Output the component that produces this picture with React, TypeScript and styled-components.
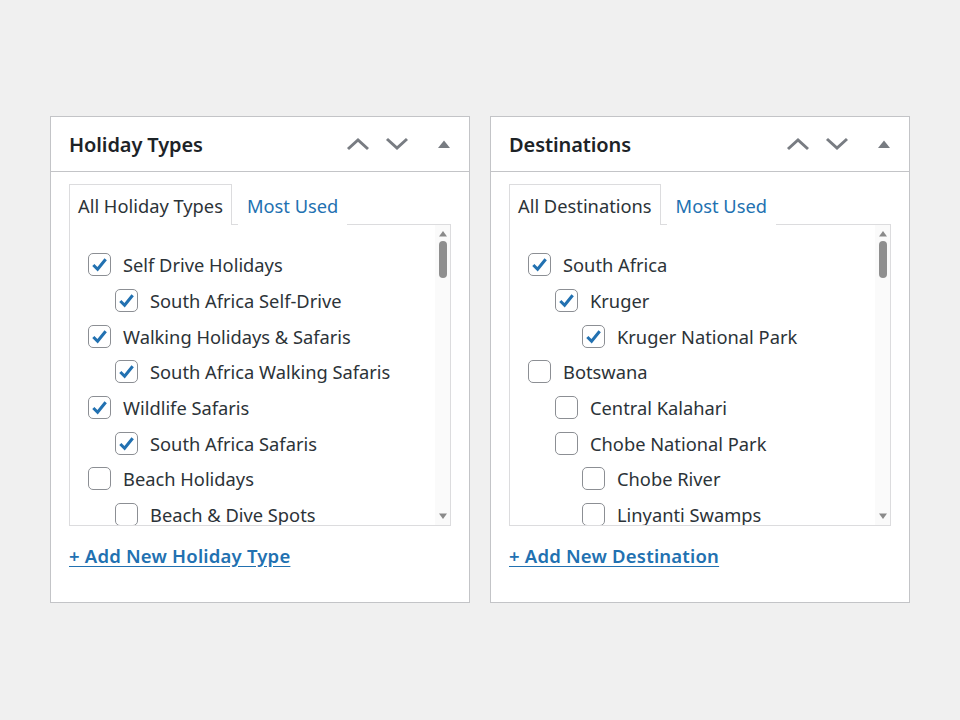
import React from "react";
import styled, { createGlobalStyle } from "styled-components";

const Global = createGlobalStyle`
  html, body { margin: 0; padding: 0; background: #f0f0f0; }
  body { font-family: "Noto Sans", "Open Sans", sans-serif; color: #2c3338; }
`;

const Page = styled.div`
  width: 960px;
  height: 720px;
  box-sizing: border-box;
  padding: 116px 50px 0 50px;
  display: flex;
  gap: 20px;
  align-items: flex-start;
`;

const Panel = styled.div`
  width: 420px;
  height: 487px;
  box-sizing: border-box;
  background: #fff;
  border: 1px solid #c3c4c7;
  display: flex;
  flex-direction: column;
`;

const Header = styled.div`
  height: 55px;
  box-sizing: border-box;
  border-bottom: 1px solid #c3c4c7;
  display: flex;
  align-items: center;
  padding: 0 1px 0 18px;
`;

const Title = styled.h2`
  margin: 0;
  flex: 1;
  font-size: 20px;
  font-weight: 600;
  color: #1d2327;
  letter-spacing: -0.1px;
`;

const HeaderButtons = styled.div`
  display: flex;
  align-items: center;
`;

const IconBtn = styled.span<{ $w: number; $ml?: number }>`
  width: ${(p) => p.$w}px;
  margin-left: ${(p) => p.$ml ?? 0}px;
  height: 30px;
  display: flex;
  align-items: center;
  justify-content: center;
`;

const Body = styled.div`
  padding: 12px 18px 0 18px;
  display: flex;
  flex-direction: column;
`;

const Tabs = styled.div`
  display: flex;
  align-items: flex-end;
  height: 40px;
`;

const Tab = styled.div<{ $active?: boolean }>`
  height: 41px;
  box-sizing: border-box;
  padding: 0 8px 0 8px;
  display: flex;
  align-items: center;
  font-size: 18.3px;
  color: ${(p) => (p.$active ? "#2c3338" : "#2271b1")};
  border: 1px solid ${(p) => (p.$active ? "#dcdcde" : "transparent")};
  border-bottom: none;
  background: #fff;
  margin-right: ${(p) => (p.$active ? "6px" : "0")};
  position: relative;
  top: 1px;
`;

const ListBox = styled.div`
  height: 302px;
  box-sizing: border-box;
  border: 1px solid #dcdcde;
  display: flex;
`;

const Items = styled.div`
  flex: 1;
  overflow: hidden;
  padding: 22px 0 0 18px;
`;

const Row = styled.div<{ $level: number }>`
  height: 35.7px;
  display: flex;
  align-items: center;
  padding-left: ${(p) => p.$level * 27}px;
  font-size: 18.3px;
  color: #2c3338;
  white-space: nowrap;
`;

const Box = styled.span<{ $checked: boolean }>`
  width: 23px;
  height: 23px;
  box-sizing: border-box;
  border: 1px solid #8c8f94;
  border-radius: 5px;
  background: #fff;
  margin-right: 12px;
  display: flex;
  align-items: center;
  justify-content: center;
  flex: none;
`;

const Scrollbar = styled.div`
  width: 15px;
  background: #fafafa;
  display: flex;
  flex-direction: column;
  align-items: center;
  padding-top: 5px;
  box-sizing: border-box;
`;

const Thumb = styled.div`
  width: 8px;
  height: 37px;
  border-radius: 4px;
  background: #8f8f8f;
  margin-top: 4px;
`;

const Spacer = styled.div`
  flex: 1;
`;

const BottomGap = styled.div`
  height: 5px;
`;

const AddLink = styled.a`
  margin-top: 17px;
  font-size: 18.5px;
  font-weight: 600;
  letter-spacing: 0.2px;
  color: #2271b1;
  text-decoration: underline;
  text-underline-offset: 3px;
  align-self: flex-start;
`;

const Chevron = ({ up }: { up: boolean }) => (
  <svg width="24" height="14" viewBox="0 0 24 14">
    <path
      d={up ? "M2 12 L12 3 L22 12" : "M2 2 L12 11 L22 2"}
      fill="none"
      stroke="#787c82"
      strokeWidth="3"
    />
  </svg>
);

const Tri = () => (
  <svg width="14" height="10" viewBox="0 0 14 10">
    <path d="M1 9 L7 1.5 L13 9 Z" fill="#787c82" />
  </svg>
);

const SmallTri = ({ up }: { up: boolean }) => (
  <svg width="10" height="7" viewBox="0 0 10 7">
    <path d={up ? "M1 6.5 L5 1 L9 6.5 Z" : "M1 0.5 L5 6 L9 0.5 Z"} fill="#8a8a8a" />
  </svg>
);

const Check = () => (
  <svg width="19" height="19" viewBox="0 0 20 20">
    <path d="M3.5 10.5 L8 15 L16.5 4.5" fill="none" stroke="#2271b1" strokeWidth="3.2" />
  </svg>
);

type Item = { label: string; level: number; checked: boolean };

const holiday: Item[] = [
  { label: "Self Drive Holidays", level: 0, checked: true },
  { label: "South Africa Self-Drive", level: 1, checked: true },
  { label: "Walking Holidays & Safaris", level: 0, checked: true },
  { label: "South Africa Walking Safaris", level: 1, checked: true },
  { label: "Wildlife Safaris", level: 0, checked: true },
  { label: "South Africa Safaris", level: 1, checked: true },
  { label: "Beach Holidays", level: 0, checked: false },
  { label: "Beach & Dive Spots", level: 1, checked: false },
];

const dest: Item[] = [
  { label: "South Africa", level: 0, checked: true },
  { label: "Kruger", level: 1, checked: true },
  { label: "Kruger National Park", level: 2, checked: true },
  { label: "Botswana", level: 0, checked: false },
  { label: "Central Kalahari", level: 1, checked: false },
  { label: "Chobe National Park", level: 1, checked: false },
  { label: "Chobe River", level: 2, checked: false },
  { label: "Linyanti Swamps", level: 2, checked: false },
];

const Box2 = ({ title, tab, items, link }: { title: string; tab: string; items: Item[]; link: string }) => (
  <Panel>
    <Header>
      <Title>{title}</Title>
      <HeaderButtons>
        <IconBtn $w={39}><Chevron up /></IconBtn>
        <IconBtn $w={39}><Chevron up={false} /></IconBtn>
        <IconBtn $w={48} $ml={4}><Tri /></IconBtn>
      </HeaderButtons>
    </Header>
    <Body>
      <Tabs>
        <Tab $active>{tab}</Tab>
        <Tab>Most Used</Tab>
      </Tabs>
      <ListBox>
        <Items>
          {items.map((it) => (
            <Row key={it.label} $level={it.level}>
              <Box $checked={it.checked}>{it.checked && <Check />}</Box>
              {it.label}
            </Row>
          ))}
        </Items>
        <Scrollbar>
          <SmallTri up />
          <Thumb />
          <Spacer />
          <SmallTri up={false} />
          <BottomGap />
        </Scrollbar>
      </ListBox>
      <AddLink href="#">{link}</AddLink>
    </Body>
  </Panel>
);

export default function App() {
  return (
    <>
      <Global />
      <Page>
        <Box2 title="Holiday Types" tab="All Holiday Types" items={holiday} link="+ Add New Holiday Type" />
        <Box2 title="Destinations" tab="All Destinations" items={dest} link="+ Add New Destination" />
      </Page>
    </>
  );
}
